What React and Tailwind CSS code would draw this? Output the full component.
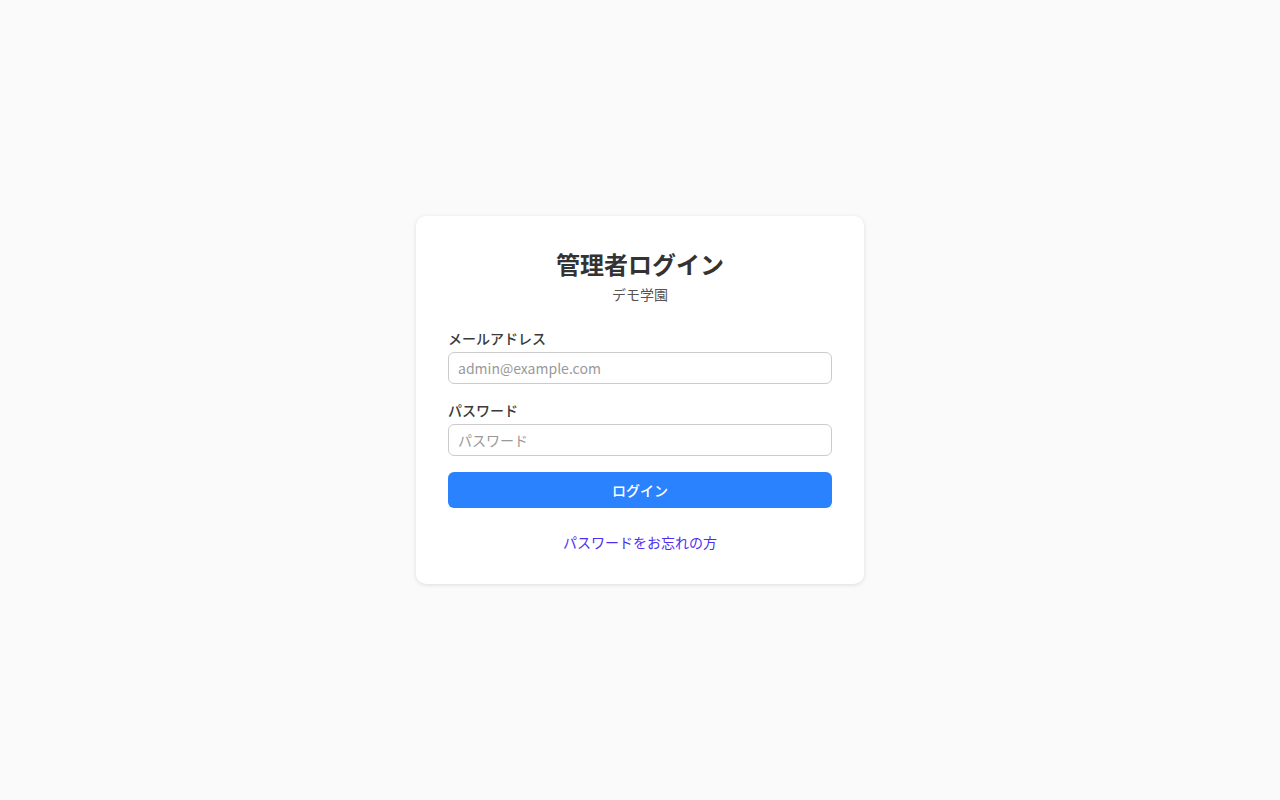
import React, { useState } from 'react';

const font = { fontFamily: '"Noto Sans CJK JP", "Noto Sans", sans-serif' };

const Field = ({ label, type = "text", placeholder, value, onChange, className = "" }) => (
  <div className={className}>
    <label className="block text-sm leading-5 font-medium text-[#3a3a3a] mb-1">{label}</label>
    <input
      type={type}
      placeholder={placeholder}
      value={value}
      onChange={onChange}
      className="w-full h-8 px-[9px] text-sm text-[#333] bg-white border border-[#ccc] rounded-md outline-none placeholder:text-[#999] focus:border-[#2b82ff]"
    />
  </div>
);

export default function App() {
  const [email, setEmail] = useState('');
  const [password, setPassword] = useState('');

  return (
    <div className="min-h-screen w-full bg-[#fafafa] flex items-center justify-center" style={font}>
      <div className="w-[448px] bg-white rounded-[10px] shadow-[0_1px_4px_rgba(0,0,0,0.12)] p-8">
        <div className="text-center mb-6">
          <h1 className="text-2xl leading-8 font-bold text-[#333]">管理者ログイン</h1>
          <p className="mt-1 text-sm leading-5 text-[#555]">デモ学園</p>
        </div>

        <form onSubmit={(e) => e.preventDefault()}>
          <Field
            label="メールアドレス"
            type="email"
            placeholder="admin@example.com"
            value={email}
            onChange={(e) => setEmail(e.target.value)}
            className="mb-4"
          />
          <Field
            label="パスワード"
            type="password"
            placeholder="パスワード"
            value={password}
            onChange={(e) => setPassword(e.target.value)}
          />
          <button
            type="submit"
            className="w-full h-9 mt-4 bg-[#2b82ff] text-white text-sm font-medium rounded-md hover:brightness-105"
          >
            ログイン
          </button>
        </form>

        <div className="text-center mt-6 text-sm leading-5">
          <a href="#" className="text-[#4f2ef2]">パスワードをお忘れの方</a>
        </div>
      </div>
    </div>
  );
}
